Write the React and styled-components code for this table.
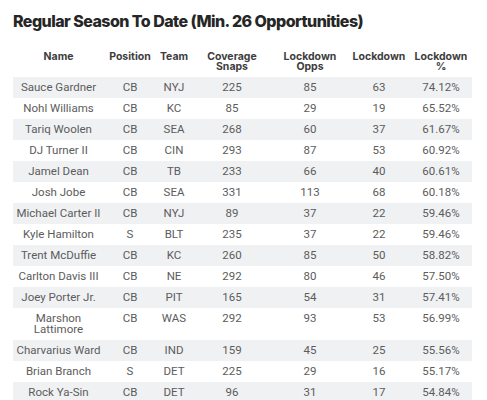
import styled, { createGlobalStyle } from 'styled-components';

const GlobalStyle = createGlobalStyle`
    body {
        margin: 0;
        background: #ffffff;
        font-family: Inter, "Liberation Sans", sans-serif;
    }
`;

const Page = styled.div`
    padding: 11px 15px 0 13px;
`;

const Title = styled.h2`
    margin: 0 0 20px 0;
    font-size: 16px;
    line-height: 20px;
    font-weight: 800;
    letter-spacing: -0.55px;
    color: #262626;
`;

const Table = styled.table`
    width: 459px;
    border-collapse: collapse;
    table-layout: fixed;
`;

const Th = styled.th`
    box-sizing: border-box;
    width: ${(p) => p.$w}px;
    padding: 1px 0 5px;
    font-size: 10.5px;
    line-height: 10px;
    font-weight: 700;
    color: #3d3d3d;
    text-align: center;
    vertical-align: top;
`;

const Row = styled.tr`
    background: ${(p) => (p.$shade ? '#f0f1f3' : '#ffffff')};
`;

const Td = styled.td`
    box-sizing: border-box;
    padding: 5px 0;
    font-family: Roboto, "Liberation Sans", sans-serif;
    font-size: 11.5px;
    line-height: 11px;
    color: #5c5c5c;
    text-align: center;
    vertical-align: top;
`;

const columns = [
    { label: 'Name', w: 91 },
    { label: 'Position', w: 52 },
    { label: 'Team', w: 36 },
    { label: 'Coverage Snaps', w: 80 },
    { label: 'Lockdown Opps', w: 76 },
    { label: 'Lockdown', w: 62 },
    { label: 'Lockdown %', w: 62 },
];

const players = [
    ['Sauce Gardner', 'CB', 'NYJ', 225, 85, 63, '74.12%'],
    ['Nohl Williams', 'CB', 'KC', 85, 29, 19, '65.52%'],
    ['Tariq Woolen', 'CB', 'SEA', 268, 60, 37, '61.67%'],
    ['DJ Turner II', 'CB', 'CIN', 293, 87, 53, '60.92%'],
    ['Jamel Dean', 'CB', 'TB', 233, 66, 40, '60.61%'],
    ['Josh Jobe', 'CB', 'SEA', 331, 113, 68, '60.18%'],
    ['Michael Carter II', 'CB', 'NYJ', 89, 37, 22, '59.46%'],
    ['Kyle Hamilton', 'S', 'BLT', 235, 37, 22, '59.46%'],
    ['Trent McDuffie', 'CB', 'KC', 260, 85, 50, '58.82%'],
    ['Carlton Davis III', 'CB', 'NE', 292, 80, 46, '57.50%'],
    ['Joey Porter Jr.', 'CB', 'PIT', 165, 54, 31, '57.41%'],
    ['Marshon Lattimore', 'CB', 'WAS', 292, 93, 53, '56.99%'],
    ['Charvarius Ward', 'CB', 'IND', 159, 45, 25, '55.56%'],
    ['Brian Branch', 'S', 'DET', 225, 29, 16, '55.17%'],
    ['Rock Ya-Sin', 'CB', 'DET', 96, 31, 17, '54.84%'],
];

export default function App() {
    return (
        <>
            <GlobalStyle />
            <Page>
                <Title>Regular Season To Date (Min. 26 Opportunities)</Title>
                <Table>
                    <thead>
                        <tr>
                            {columns.map((c) => (
                                <Th key={c.label} $w={c.w}>
                                    {c.label}
                                </Th>
                            ))}
                        </tr>
                    </thead>
                    <tbody>
                        {players.map((p, i) => (
                            <Row key={p[0]} $shade={i % 2 === 0}>
                                {p.map((v, j) => (
                                    <Td key={j}>{v}</Td>
                                ))}
                            </Row>
                        ))}
                    </tbody>
                </Table>
            </Page>
        </>
    );
}
